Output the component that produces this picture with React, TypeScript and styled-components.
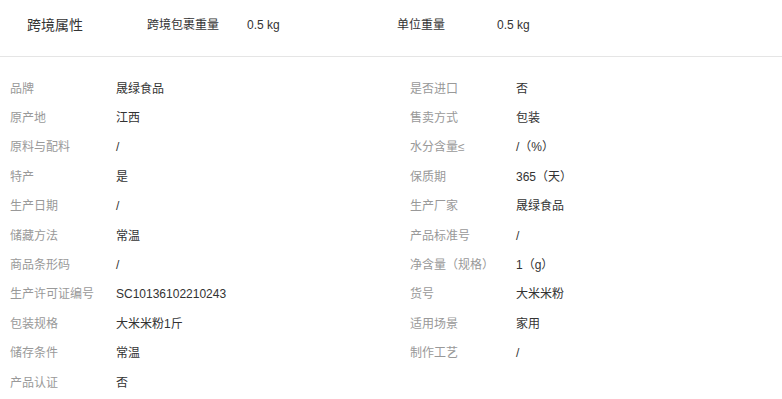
import * as React from 'react';
import styled, { createGlobalStyle } from 'styled-components';

const GlobalStyle = createGlobalStyle`
  body {
    margin: 0;
    background: #fff;
    font-family: 'Liberation Sans', 'Noto Sans CJK SC', sans-serif;
  }
`;

const headerItems = [
  { label: '跨境包裹重量', value: '0.5 kg' },
  { label: '单位重量', value: '0.5 kg' },
];

const attrs: [string, string][] = [
  ['品牌', '晟绿食品'],
  ['是否进口', '否'],
  ['原产地', '江西'],
  ['售卖方式', '包装'],
  ['原料与配料', '/'],
  ['水分含量≤', '/（%）'],
  ['特产', '是'],
  ['保质期', '365（天）'],
  ['生产日期', '/'],
  ['生产厂家', '晟绿食品'],
  ['储藏方法', '常温'],
  ['产品标准号', '/'],
  ['商品条形码', '/'],
  ['净含量（规格）', '1（g）'],
  ['生产许可证编号', 'SC10136102210243'],
  ['货号', '大米米粉'],
  ['包装规格', '大米米粉1斤'],
  ['适用场景', '家用'],
  ['储存条件', '常温'],
  ['制作工艺', '/'],
  ['产品认证', '否'],
];

const App: React.FC = () => (
  <Page>
    <GlobalStyle />
    <Header>
      <HeaderTitle>跨境属性</HeaderTitle>
      {headerItems.map((it) => (
        <HeaderItem key={it.label}>
          <HeaderLabel>{it.label}</HeaderLabel>
          <span>{it.value}</span>
        </HeaderItem>
      ))}
    </Header>
    <Grid>
      {attrs.map(([label, value]) => (
        <Cell key={label}>
          <Label>{label}</Label>
          <Value>{value}</Value>
        </Cell>
      ))}
    </Grid>
  </Page>
);

const Page = styled.div`
  width: 782px;
  font-size: 12px;
  line-height: 16px;
  color: #333;
`;

const Header = styled.div`
  display: flex;
  align-items: center;
  box-sizing: border-box;
  height: 57px;
  padding: 0 0 6px 27px;
  border-bottom: 1px solid #e5e5e5;
`;

const HeaderTitle = styled.div`
  width: 120px;
  font-size: 14px;
  line-height: 18px;
  color: #333;
`;

const HeaderItem = styled.div`
  display: flex;
  width: 250px;
  color: #333;
`;

const HeaderLabel = styled.span`
  width: 100px;
`;

const Grid = styled.div`
  display: grid;
  grid-template-columns: 400px 1fr;
  grid-auto-rows: 29.4px;
  padding: 17px 0 0 10px;
`;

const Cell = styled.div`
  display: flex;
  align-items: center;
`;

const Label = styled.span`
  width: 106px;
  flex-shrink: 0;
  color: #999;
`;

const Value = styled.span`
  color: #333;
`;

export default App;
